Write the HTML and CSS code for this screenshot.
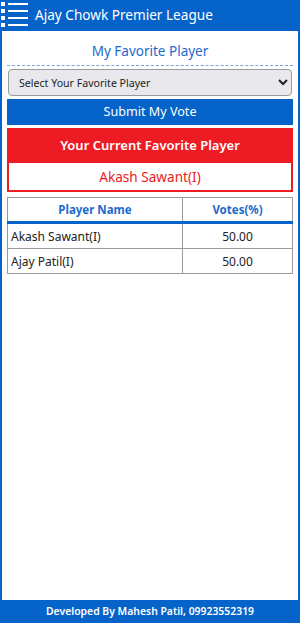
FILE: index.html
```html
<!DOCTYPE html>
<html lang="en">
<head>
    <meta charset="UTF-8">
    <meta name="viewport" content="width=device-width, initial-scale=1.0">
    <title>Ajay Chowk Premier League</title>
    <link rel="stylesheet" href="styles.css">
</head>
<body>
    <div class="page">
        <div class="topbar">
            <svg class="menu" width="30" height="28" viewBox="0 0 30 28">
                <g fill="#fff">
                    <rect x="1" y="1" width="4" height="4"/>
                    <rect x="1" y="8" width="4" height="4"/>
                    <rect x="1" y="15" width="4" height="4"/>
                    <rect x="1" y="22" width="4" height="4"/>
                    <rect x="8" y="2" width="20" height="2"/>
                    <rect x="8" y="9" width="20" height="2"/>
                    <rect x="8" y="16" width="20" height="2"/>
                    <rect x="8" y="23" width="20" height="2"/>
                </g>
            </svg>
            <span class="title">Ajay Chowk Premier League</span>
        </div>

        <div class="content">
            <h2>My Favorite Player</h2>

            <select class="picker">
                <option>Select Your Favorite Player</option>
                <option>Akash Sawant(I)</option>
                <option>Ajay Patil(I)</option>
            </select>

            <div class="submit">Submit My Vote</div>

            <div class="current">
                <div class="current-head">Your Current Favorite Player</div>
                <div class="current-name">Akash Sawant(I)</div>
            </div>

            <table class="votes">
                <thead>
                    <tr><th class="name-col">Player Name</th><th>Votes(%)</th></tr>
                </thead>
                <tbody>
                    <tr><td>Akash Sawant(I)</td><td class="num">50.00</td></tr>
                    <tr><td>Ajay Patil(I)</td><td class="num">50.00</td></tr>
                </tbody>
            </table>
        </div>

        <div class="footer">Developed By Mahesh Patil, 09923552319</div>
    </div>
</body>
</html>
```

FILE: styles.css
```css
body {
    margin: 0;
    font-family: "Noto Sans", "Open Sans", sans-serif;
    background-color: #fff;
}

.page {
    width: 300px;
    height: 623px;
    background-color: #0563c9;
    display: flex;
    flex-direction: column;
}

.topbar {
    height: 31px;
    display: flex;
    align-items: center;
    color: #fff;
}

.menu {
    margin: 0 5px 1px 0;
}

.title {
    font-size: 13.6px;
    margin-top: -3px;
}

.content {
    flex: 1;
    background-color: #fff;
    margin: 0 2px;
    padding: 0 5px;
}

.content h2 {
    margin: 8px 0 0;
    font-size: 13.5px;
    font-weight: normal;
    color: #1c6acc;
    text-align: center;
    line-height: 24px;
    padding-bottom: 2px;
    border-bottom: 1px dashed #7f9fd6;
}

.picker {
    display: block;
    width: 284px;
    height: 27px;
    margin: 3px 0 0 1px;
    padding: 0 6px;
    font-family: "Noto Sans", sans-serif;
    font-size: 10.6px;
    color: #222;
    background-color: #e9e9ed;
    border: 1px solid #9a9a9a;
    border-radius: 4px;
}

.submit {
    margin-top: 3px;
    height: 26px;
    line-height: 25px;
    background-color: #0563c9;
    color: #fff;
    font-size: 12.6px;
    text-align: center;
}

.current {
    margin-top: 3px;
    border: 1px solid #ed1c24;
    background-color: #ed1c24;
}

.current-head {
    height: 33px;
    line-height: 32px;
    color: #fff;
    font-weight: 600;
    font-size: 13px;
    text-align: center;
}

.current-name {
    height: 27px;
    line-height: 27px;
    background-color: #fff;
    border: 1px solid #ed1c24;
    color: #ed1c24;
    font-size: 13.6px;
    text-align: center;
}

.votes {
    width: 286px;
    margin-top: 5px;
    border-collapse: collapse;
    font-size: 12px;
}

.votes th, .votes td {
    border: 1px solid #9a9a9a;
    height: 24px;
    padding: 0 3px;
}

.votes th {
    color: #1c6acc;
    border-bottom: 3px solid #0563c9;
    height: 23px;
    font-size: 11.5px;
}

.votes .name-col {
    width: 168px;
}

.votes td {
    color: #222;
}

.votes .num {
    text-align: center;
}

.footer {
    height: 23px;
    line-height: 23px;
    color: #fff;
    font-weight: 600;
    font-size: 10.4px;
    text-align: center;
}
```
